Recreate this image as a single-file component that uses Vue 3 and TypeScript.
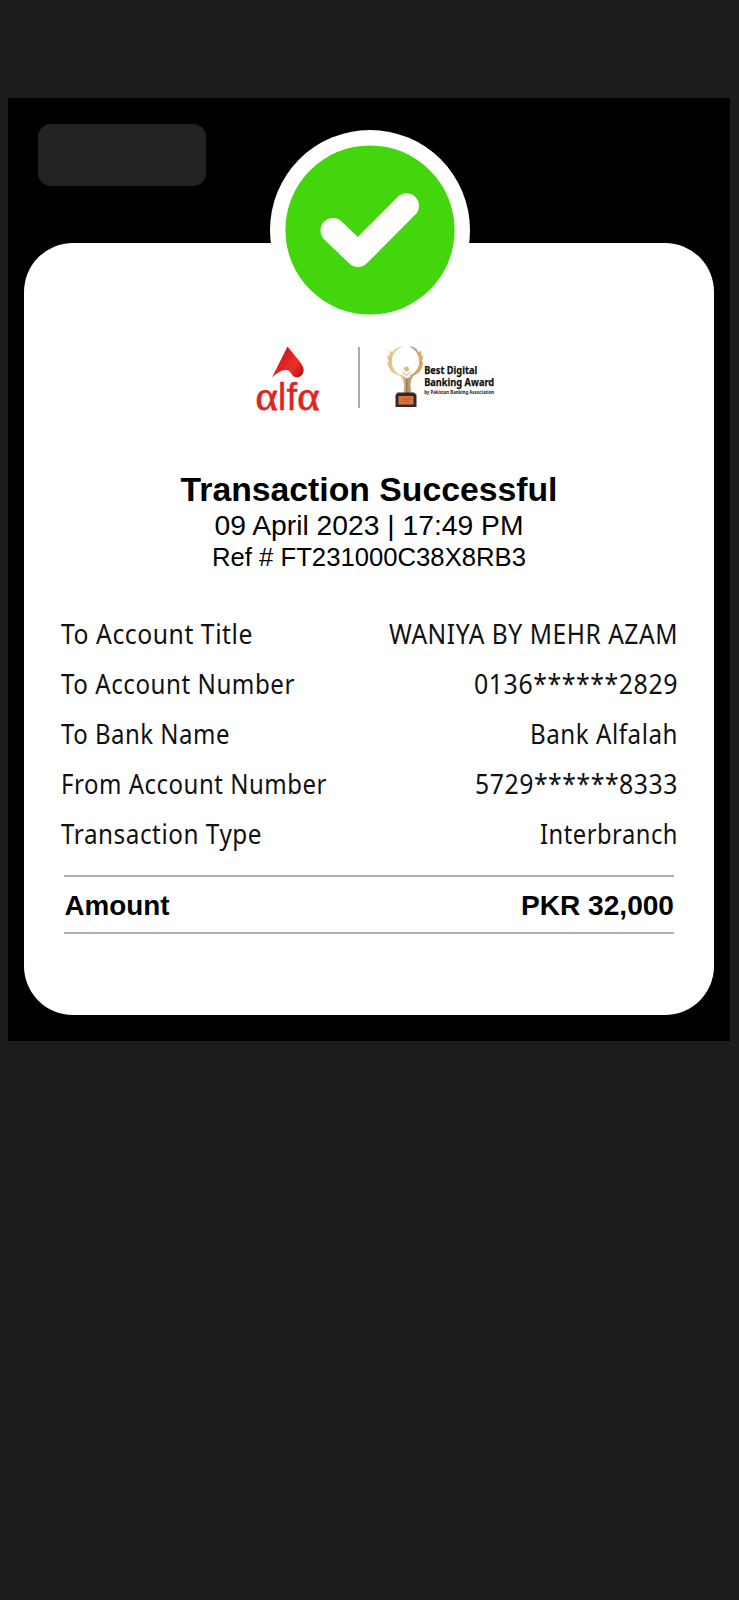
<script setup lang="ts">
interface Line {
  text: string
  width: number
}

interface Detail {
  label: Line
  value: Line
}

const details: Detail[] = [
  { label: { text: 'To Account Title', width: 192 }, value: { text: 'WANIYA BY MEHR AZAM', width: 289 } },
  { label: { text: 'To Account Number', width: 234 }, value: { text: '0136******2829', width: 204 } },
  { label: { text: 'To Bank Name', width: 169 }, value: { text: 'Bank Alfalah', width: 148 } },
  { label: { text: 'From Account Number', width: 266 }, value: { text: '5729******8333', width: 203 } },
  { label: { text: 'Transaction Type', width: 201 }, value: { text: 'Interbranch', width: 138 } },
]
</script>

<template>
  <main class="screen">
    <section class="panel">
      <div class="pill"></div>
      <svg class="badge" viewBox="0 0 200 200">
        <circle cx="100" cy="100" r="100" fill="#fff" />
        <circle cx="100" cy="100" r="84.6" fill="#43d60c" />
        <path d="M63 100.5 L88 124.5 L136.5 75.8" fill="none" stroke="#fff" stroke-width="25" stroke-linecap="round" stroke-linejoin="round" />
      </svg>

      <article class="card">
        <header class="brands">
          <svg class="alfa" width="70" height="84" viewBox="0 0 70 84">
            <defs>
              <linearGradient id="flame" x1="0" y1="0.2" x2="1" y2="0.8">
                <stop offset="0" stop-color="#a5161a" />
                <stop offset="0.35" stop-color="#d9201f" />
                <stop offset="0.7" stop-color="#ee3027" />
                <stop offset="1" stop-color="#b5151a" />
              </linearGradient>
            </defs>
            <path d="M33.500 4.500 L18 35.500 C23 31 28 27.500 33 28 C37.500 29 37.500 35 42.500 35.500 C47 35.800 50.500 31 49.500 26.500 C49 24 47.500 22.500 46.500 20.500 Z" fill="url(#flame)" />
            <text class="alfa-text" x="1.500" y="68" textLength="64" lengthAdjust="spacingAndGlyphs"><tspan class="alpha">α</tspan>lf<tspan class="alpha">α</tspan></text>
          </svg>
          <span class="divider"></span>
          <svg class="award" width="120" height="72" viewBox="0 0 120 72">
            <defs>
              <linearGradient id="gold" gradientUnits="userSpaceOnUse" x1="1" y1="0" x2="36" y2="0">
                <stop offset="0" stop-color="#e3b173" />
                <stop offset="0.35" stop-color="#efd6b4" />
                <stop offset="0.6" stop-color="#b8946f" />
                <stop offset="1" stop-color="#dfa965" />
              </linearGradient>
            </defs>
            <g fill="url(#gold)">
              <path d="M17 4.500 C8 8 5 15 6 22 C7 28 11 31.500 17 34 C9 34 4 29.500 3 25 L1 20 L3 20.500 L1 12.500 L3.500 14.500 L4 8.500 L6 10.500 C8.500 6.500 12 4.500 17 4.500 Z" />
              <path d="M23 4.500 C31 8 34 15 33 22 C32 28 28 31.500 23 34 C31 34 35 29.500 36 25 L37.500 20 L35.800 20.500 L37.500 12.500 L35.500 14.500 L35 8.500 L33 10.500 C31 6.500 28 4.500 23 4.500 Z" />
              <path d="M12.500 32 C16.500 35 17.500 39 18 43 L17.500 51 H25 L24.500 43 C24.500 38 26 35 29 32 C25 33 23.500 36 21.500 36 C18.500 36 17 33 12.500 32 Z" />
            </g>
            <circle cx="20.500" cy="27" r="2.500" fill="#dcb98f" />
            <path d="M16.500 30 L20.500 33.500 L24.500 30" fill="none" stroke="#e8cda9" stroke-width="1.600" />
            <path d="M20.800 37 V51" stroke="#8f6c54" stroke-width="1.100" />
            <path d="M11.500 50.500 H28 L30.500 53 V65 H9.500 V53 Z" fill="#352827" />
            <rect x="12.500" y="54" width="15" height="8.500" fill="#d9753a" />
            <path d="M16 57 H24.500 M17.500 59.500 H23" stroke="#a95029" stroke-width="0.800" />
            <text class="award-title" x="38.200" y="32.300" textLength="53" lengthAdjust="spacingAndGlyphs">Best Digital</text>
            <text class="award-title" x="38.200" y="43.600" textLength="70" lengthAdjust="spacingAndGlyphs">Banking Award</text>
            <text class="award-by" x="38.200" y="51.500" textLength="70" lengthAdjust="spacingAndGlyphs">by Pakistan Banking Association</text>
          </svg>
        </header>

        <div class="summary">
          <svg class="line title" width="377" height="38"><text x="-0.500" y="31" textLength="377" lengthAdjust="spacingAndGlyphs">Transaction Successful</text></svg>
          <svg class="line date" width="309" height="34"><text x="-0.500" y="27" textLength="309" lengthAdjust="spacingAndGlyphs">09 April 2023 | 17:49 PM</text></svg>
          <svg class="line ref" width="315" height="31"><text x="0" y="24" textLength="314" lengthAdjust="spacingAndGlyphs">Ref # FT231000C38X8RB3</text></svg>
        </div>

        <div class="details">
          <div v-for="row in details" :key="row.label.text" class="row">
            <svg class="line" :width="row.label.width" height="40">
              <text x="0" y="30" :textLength="row.label.width" lengthAdjust="spacingAndGlyphs">{{ row.label.text }}</text>
            </svg>
            <svg class="line" :width="row.value.width" height="40">
              <text x="0" y="30" :textLength="row.value.width" lengthAdjust="spacingAndGlyphs">{{ row.value.text }}</text>
            </svg>
          </div>
        </div>

        <footer class="amount">
          <svg class="line" width="105" height="40"><text x="0.500" y="30" textLength="105" lengthAdjust="spacingAndGlyphs">Amount</text></svg>
          <svg class="line" width="153" height="40"><text x="0" y="30" textLength="153" lengthAdjust="spacingAndGlyphs">PKR 32,000</text></svg>
        </footer>
      </article>
    </section>
  </main>
</template>

<style>
body {
  background: #1c1c1e;
}
</style>

<style scoped>
.screen {
  box-sizing: border-box;
  width: 739px;
  height: 1600px;
  padding: 98px 9px 0 8px;
  background: #1c1c1e;
}
.panel {
  position: relative;
  box-sizing: border-box;
  height: 943px;
  padding: 26px 16px 0;
  background: #000;
}
.pill {
  width: 167.5px;
  height: 61.5px;
  margin-left: 14px;
  border-radius: 13px;
  background: #222;
}
.badge {
  position: absolute;
  top: 32.3px;
  left: 261.6px;
  width: 200px;
  height: 200px;
}
.card {
  box-sizing: border-box;
  height: 772.5px;
  margin-top: 57px;
  padding-top: 99.5px;
  border-radius: 49px;
  background: #fff;
}
.brands {
  display: flex;
  align-items: flex-start;
  height: 72px;
  padding-left: 230px;
}
.brands svg {
  flex: none;
  overflow: visible;
}
.divider {
  width: 2px;
  height: 61px;
  margin: 5px 26px 0 34px;
  background: #aaa;
}
.alfa-text {
  font: 39px "Liberation Sans", sans-serif;
  fill: #e0241f;
  stroke: #e0241f;
  stroke-width: 0.3px;
}
.alpha {
  font-family: "Liberation Serif", serif;
  font-size: 43px;
  stroke-width: 0.8px;
}
.award-title {
  font: bold 11px "Noto Sans", sans-serif;
  fill: #111;
  stroke: #111;
  stroke-width: 0.25px;
}
.award-by {
  font: bold 4.5px "Noto Sans", sans-serif;
  fill: #222;
}
.line {
  display: block;
  overflow: visible;
}
.summary {
  display: flex;
  flex-direction: column;
  align-items: center;
  margin-top: 56px;
  font-family: "Liberation Sans", sans-serif;
}
.title {
  font-size: 34px;
  font-weight: bold;
}
.date {
  font-size: 27.5px;
}
.ref {
  font-size: 26px;
}
.details {
  margin-top: 40.5px;
  padding: 0 36px 0 37px;
  font: 27px "Noto Sans", sans-serif;
  letter-spacing: 0.6px;
  fill: #111;
}
.row {
  display: flex;
  justify-content: space-between;
  height: 50.2px;
}
.amount {
  display: flex;
  justify-content: space-between;
  box-sizing: border-box;
  height: 59.5px;
  margin: 10.5px 40px 0;
  padding-top: 8px;
  border-top: 2px solid #b0b0b0;
  border-bottom: 2px solid #b0b0b0;
  font: bold 28px "Liberation Sans", sans-serif;
}
</style>
